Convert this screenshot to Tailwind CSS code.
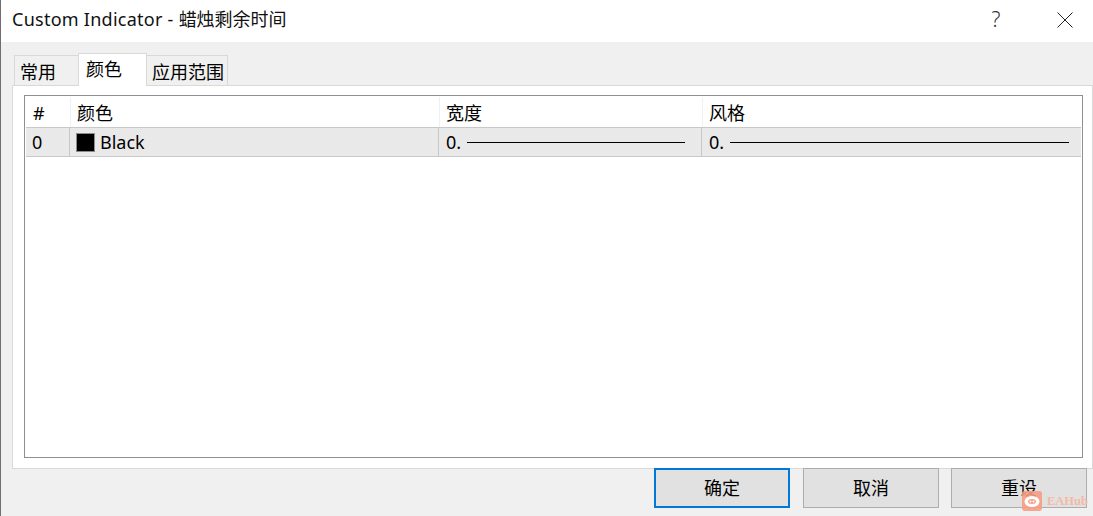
<!DOCTYPE html>
<html lang="en">
<head>
    <meta charset="UTF-8">
    <title>Custom Indicator</title>
    <script src="https://cdn.jsdelivr.net/npm/@tailwindcss/browser@4"></script>
</head>
<body class="relative w-[1093px] h-[516px] overflow-hidden bg-[#f0f0f0] border-l border-[#6e6e6e] text-[18px] text-black font-['Noto_Sans','Noto_Sans_CJK_SC',sans-serif]">
    <!-- title bar -->
    <div class="flex items-start h-[42px] bg-white pl-[11px]">
        <span class="flex-1 leading-[39px] text-[#111]"><span class="tracking-[0.26px]">Custom Indicator - </span>蜡烛剩余时间</span>
        <span class="w-[20px] text-center text-[21px] font-light leading-[38px] text-[#333] mr-[51px]">?</span>
        <svg class="mr-[20px] mt-[12px]" width="16" height="16" viewBox="0 0 16 16" fill="none" stroke="#222" stroke-width="1"><path d="M0.5 0.5L15.5 15.5M15.5 0.5L0.5 15.5"/></svg>
    </div>

    <!-- tabs -->
    <div class="flex items-end h-[43px] pl-[13px]">
        <div class="w-[65px] h-[30px] bg-[#f0f0f0] border border-b-0 border-[#d9d9d9] pl-[5px] leading-[32px]">常用</div>
        <div class="relative z-10 w-[69px] h-[33px] -mb-px -ml-px bg-white border border-b-0 border-[#d9d9d9] pl-[7px] leading-[30px]">颜色</div>
        <div class="w-[82px] h-[30px] -ml-px bg-[#f0f0f0] border border-b-0 border-[#d9d9d9] pl-[5px] leading-[32px]">应用范围</div>
    </div>

    <!-- panel -->
    <div class="w-[1081px] h-[384px] ml-[11px] bg-white border border-[#d9d9d9] pt-[9px] pl-[11px]">
        <div class="w-[1059px] h-[363px] border border-[#8e8e96] p-px">
            <div class="flex h-[31px] border-b border-[#c8c8c8]">
                <div class="w-[45px] pl-[7px] leading-[32px] border-r border-[#f0f0f0]">#</div>
                <div class="w-[369px] pl-[6px] leading-[32px] border-r border-[#f0f0f0]">颜色</div>
                <div class="w-[263px] pl-[6px] leading-[32px] border-r border-[#f0f0f0]">宽度</div>
                <div class="flex-1 pl-[6px] leading-[32px]">风格</div>
            </div>
            <div class="flex h-[29px] bg-[#e9e9e9] border-b border-[#c8c8c8]">
                <div class="w-[44px] pl-[6px] leading-[28px] border-r border-[#c8c8c8]">0</div>
                <div class="flex items-center gap-[5px] w-[369px] pl-[6px] border-r border-[#c8c8c8]">
                    <span class="w-[19px] h-[19px] bg-black border border-[#8c8c8c]"></span>
                    <span class="leading-[28px]">Black</span>
                </div>
                <div class="flex items-center gap-[6px] w-[263px] pl-[7px] pr-[16px] border-r border-[#c8c8c8]">
                    <span class="leading-[28px]">0.</span>
                    <span class="flex-1 h-px bg-black"></span>
                </div>
                <div class="flex items-center flex-1 gap-[6px] pl-[7px] pr-[12px]">
                    <span class="leading-[28px]">0.</span>
                    <span class="flex-1 h-px bg-black"></span>
                </div>
            </div>
        </div>
    </div>

    <!-- buttons -->
    <div class="flex justify-end gap-[12px] -mt-px pr-[6px]">
        <button class="w-[136px] h-[40px] mr-px bg-[#e1e1e1] border-2 border-[#0078d7]">确定</button>
        <button class="w-[136px] h-[40px] bg-[#e1e1e1] border border-[#adadad]">取消</button>
        <button class="w-[136px] h-[40px] bg-[#e1e1e1] border border-[#adadad]">重设</button>
    </div>

    <!-- watermark -->
    <div class="absolute left-[1021px] top-[491px] flex items-center gap-[5px] opacity-90">
        <svg width="20" height="20" viewBox="0 0 20 20">
            <rect width="20" height="20" rx="3" fill="#f79d84"/>
            <ellipse cx="10" cy="10.5" rx="7.5" ry="5.5" fill="#fff"/>
            <ellipse cx="10" cy="10.5" rx="4" ry="2.5" fill="#f79d84"/>
            <circle cx="8.5" cy="10.5" r="1" fill="#fff"/>
            <circle cx="11.5" cy="10.5" r="1" fill="#fff"/>
        </svg>
        <span class="text-[12.5px] font-bold text-[#f7b4a2] font-['Liberation_Serif',serif]">EAHub</span>
    </div>
</body>
</html>
